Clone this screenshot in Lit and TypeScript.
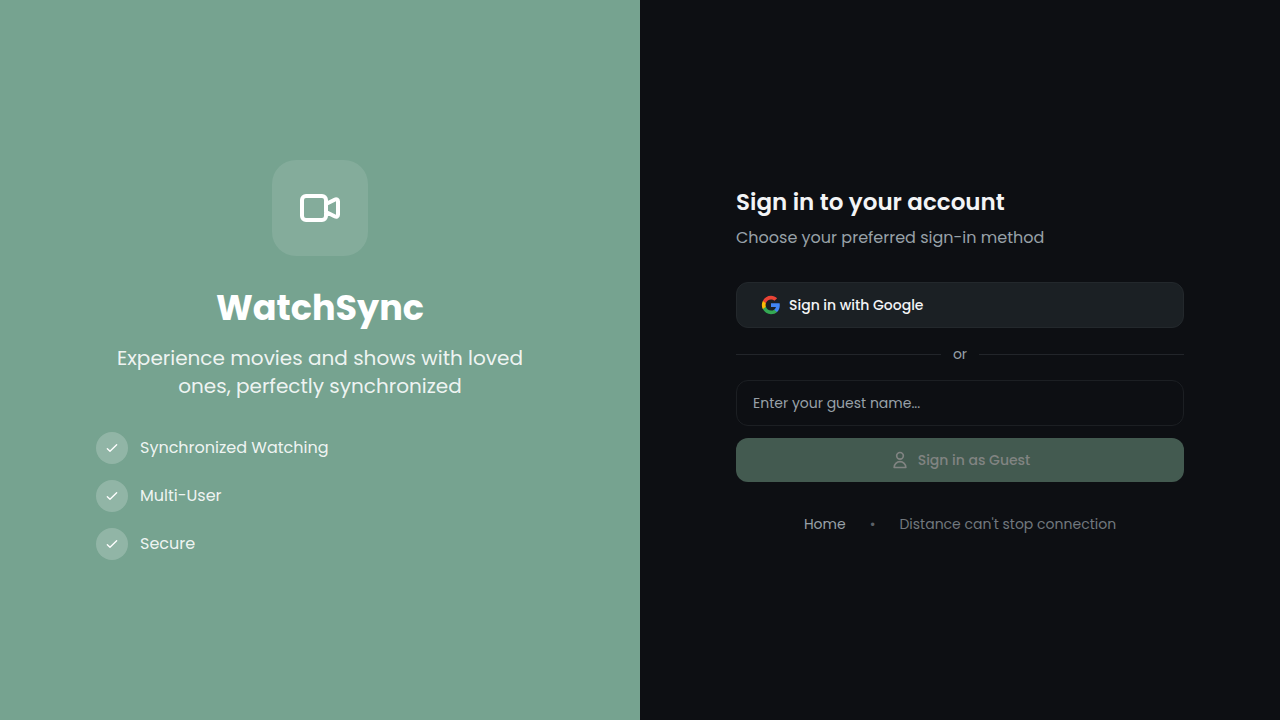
import { LitElement, html, css, svg } from "lit";
import { customElement, state } from "lit/decorators.js";

const FEATURES = ["Synchronized Watching", "Multi-User", "Secure"];

const videoIcon = html`<svg class="video" viewBox="0 0 24 24" aria-hidden="true">
  ${svg`<path d="M15 10l4.553-2.276A1 1 0 0121 8.618v6.764a1 1 0 01-1.447.894L15 14M5 18h8a2 2 0 002-2V8a2 2 0 00-2-2H5a2 2 0 00-2 2v8a2 2 0 002 2z"/>`}
</svg>`;

const checkIcon = html`<svg class="check" viewBox="0 0 24 24" aria-hidden="true">
  ${svg`<path d="M5 13l4 4L19 7"/>`}
</svg>`;

const userIcon = html`<svg class="user" viewBox="0 0 24 24" aria-hidden="true">
  ${svg`<path d="M16 7a4 4 0 11-8 0 4 4 0 018 0zM12 14a7 7 0 00-7 7h14a7 7 0 00-7-7z"/>`}
</svg>`;

const googleIcon = html`<svg class="google-mark" viewBox="0 0 24 24" aria-hidden="true">
  ${svg`
    <path fill="#4285F4" d="M22.56 12.25c0-.78-.07-1.53-.2-2.25H12v4.26h5.92c-.26 1.37-1.04 2.53-2.21 3.31v2.77h3.57c2.08-1.92 3.28-4.74 3.28-8.09z"/>
    <path fill="#34A853" d="M12 23c2.97 0 5.46-.98 7.28-2.66l-3.57-2.77c-.98.66-2.23 1.06-3.71 1.06-2.86 0-5.29-1.93-6.16-4.53H2.18v2.84C3.99 20.53 7.7 23 12 23z"/>
    <path fill="#FBBC05" d="M5.84 14.09c-.22-.66-.35-1.36-.35-2.09s.13-1.43.35-2.09V7.07H2.18C1.43 8.55 1 10.22 1 12s.43 3.45 1.18 4.93l3.66-2.84z"/>
    <path fill="#EA4335" d="M12 5.38c1.62 0 3.06.56 4.21 1.64l3.15-3.15C17.45 2.09 14.97 1 12 1 7.7 1 3.99 3.47 2.18 7.07l3.66 2.84c.87-2.6 3.3-4.53 6.16-4.53z"/>`}
</svg>`;

@customElement("app-root")
export class AppRoot extends LitElement {
  @state() private guestName = "";

  static styles = css`
    :host {
      display: grid;
      grid-template-columns: 1fr 1fr;
      min-height: 100vh;
      background: #0d0f13;
      color: #f3f4f6;
      font-family: Poppins, Inter, sans-serif;
      font-size: 14px;
      line-height: 20px;
      -webkit-font-smoothing: antialiased;
    }
    * { box-sizing: border-box; }
    h1, h2, p, ul { margin: 0; padding: 0; }
    svg { display: block; flex: none; fill: none; stroke: currentColor; stroke-linecap: round; stroke-linejoin: round; }
    .brand, .account {
      display: flex;
      flex-direction: column;
      justify-content: center;
      padding: 48px 96px;
    }
    .brand { background: #76a390; color: #fff; align-items: center; }
    .logo {
      display: grid;
      place-items: center;
      width: 96px;
      height: 96px;
      margin-bottom: 32px;
      border-radius: 24px;
      background: rgb(255 255 255 / 0.1);
    }
    .video { width: 48px; stroke-width: 2; }
    h1 { font-size: 35px; line-height: 40px; font-weight: 700; margin-bottom: 16px; }
    .tagline {
      max-width: 448px;
      margin-bottom: 32px;
      font-size: 20px;
      line-height: 28px;
      text-align: center;
      color: rgb(255 255 255 / 0.9);
    }
    .features { display: grid; gap: 16px; width: 100%; list-style: none; }
    .feature {
      display: flex;
      align-items: center;
      gap: 12px;
      font-size: 16px;
      line-height: 24px;
      color: rgb(255 255 255 / 0.9);
    }
    .tick {
      display: grid;
      place-items: center;
      width: 32px;
      height: 32px;
      border-radius: 50%;
      background: rgb(255 255 255 / 0.2);
      color: #fff;
    }
    .check { width: 16px; stroke-width: 2; }
    h2 { font-size: 23px; line-height: 32px; font-weight: 600; margin-bottom: 8px; }
    .hint { font-size: 16px; line-height: 24px; color: #98a1a8; margin-bottom: 32px; }
    button, input { font: inherit; width: 100%; border-radius: 12px; }
    button { display: flex; align-items: center; gap: 8px; font-weight: 500; }
    .google {
      height: 46px;
      padding: 0 24px;
      border: 1px solid #23282c;
      background: #1b2024;
      color: #f3f4f6;
      cursor: pointer;
    }
    .google-mark { width: 20px; stroke: none; }
    .divider {
      display: flex;
      align-items: center;
      gap: 12px;
      margin: 16px 0;
      color: #98a1a8;
    }
    .rule { flex: 1; height: 1px; background: #22252a; }
    form { display: grid; gap: 12px; }
    input {
      height: 46px;
      padding: 0 16px;
      border: 1px solid #1c1f23;
      background: #0d0f13;
      color: #f3f4f6;
      outline-color: #76a390;
    }
    input::placeholder { color: #98a1a8; opacity: 1; }
    .guest {
      height: 44px;
      justify-content: center;
      border: 0;
      background: #76a390;
      color: #0d0f13;
      cursor: pointer;
    }
    .guest:disabled { background: #435a50; color: #818482; cursor: default; }
    .user { width: 20px; stroke-width: 2; }
    footer {
      display: flex;
      justify-content: center;
      gap: 24px;
      margin-top: 32px;
      color: #71787e;
    }
    .home { color: #98a1a8; text-decoration: none; }
    .dot { color: #5c6168; }
    @media (max-width: 800px) {
      :host { grid-template-columns: 1fr; }
      .brand, .account { padding: 48px 24px; }
    }
  `;

  render() {
    return html`
      <section class="brand">
        <div class="logo">${videoIcon}</div>
        <h1>WatchSync</h1>
        <p class="tagline">Experience movies and shows with loved ones, perfectly synchronized</p>
        <ul class="features">
          ${FEATURES.map((f) => html`<li class="feature"><span class="tick">${checkIcon}</span>${f}</li>`)}
        </ul>
      </section>
      <main class="account">
        <h2>Sign in to your account</h2>
        <p class="hint">Choose your preferred sign-in method</p>
        <button class="google" type="button">${googleIcon}Sign in with Google</button>
        <div class="divider"><span class="rule"></span>or<span class="rule"></span></div>
        <form @submit=${(e: Event) => e.preventDefault()}>
          <input
            type="text"
            aria-label="Guest name"
            placeholder="Enter your guest name..."
            .value=${this.guestName}
            @input=${(e: Event) => (this.guestName = (e.target as HTMLInputElement).value)}
          />
          <button class="guest" type="submit" ?disabled=${!this.guestName.trim()}>${userIcon}Sign in as Guest</button>
        </form>
        <footer>
          <a class="home" href="#">Home</a>
          <span class="dot">•</span>
          <span>Distance can't stop connection</span>
        </footer>
      </main>
    `;
  }
}
